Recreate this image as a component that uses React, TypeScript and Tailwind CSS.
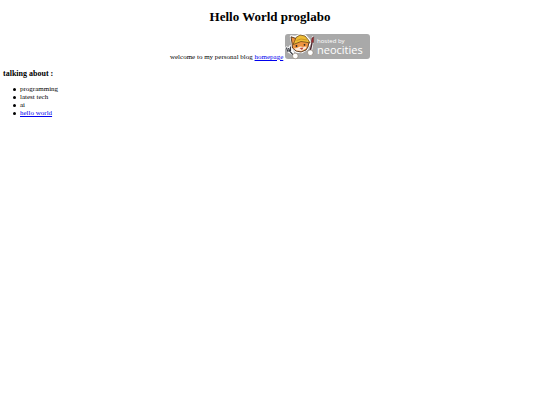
const topics = ["programming", "latest tech", "ai"];

const itemClass =
  "flex items-center gap-1 before:size-[3px] before:rounded-full before:bg-black before:content-['']";

function NeocitiesBadge() {
  return (
    <svg
      className="inline-block h-[25px] w-[85px] overflow-visible align-baseline"
      viewBox="0 0 85 25"
      role="img"
      aria-label="hosted by neocities"
    >
      <rect x="0" y="0" width="85" height="25" rx="3" fill="#a9a9a9" />
      {/* white outline round the mascot and its tools */}
      <g fill="#fff" stroke="#fff" strokeWidth="2.4" strokeLinejoin="round" strokeLinecap="round">
        <path d="M7 8 L6 2.5 L10 3 L15 1 L20 1.5 L24 6 L25 9 L22 15 L17 18 L11 17.5 L7.5 14 Z" />
        <path d="M1.5 13.5 L3 17 L9 21 L5 12.5" />
        <path d="M28 3.5 L26 16" />
      </g>
      {/* fork */}
      <path
        d="M1.5 13.5 L2.5 17 L5.5 16.5 L5.5 12.5 M3.5 14 L4.5 17 L9 22"
        fill="none"
        stroke="#3a3d45"
        strokeWidth="1.2"
      />
      {/* brush */}
      <path d="M27 9 L25.2 17" stroke="#4a2830" strokeWidth="1.5" />
      <path d="M26.2 8.5 L27 4 L28.8 2.8 L28.4 8.5 Z" fill="#a82c30" stroke="#4a2024" strokeWidth="0.6" />
      {/* head */}
      <path
        d="M7 9 L6 2.8 L11 4.5 L20 4 L24 8 L23 13 L21 16 L16 18 L11 17 L7.5 14 Z"
        fill="#ee9440"
        stroke="#4a3020"
        strokeWidth="0.9"
      />
      <path d="M9 14.5 L12 14 L15 12.5 L18 13 L21.5 12.5 L21 14.5 L16.5 17 L11.5 16.5 Z" fill="#fbeadb" />
      {/* hat */}
      <path
        d="M9.5 7.5 L11 3.5 L15 1 L20 2 L23 5.5 L25 9 L21 8.2 L16 7.5 L11 9.5 L8 10.5 Z"
        fill="#efbd35"
        stroke="#6b4a18"
        strokeWidth="0.8"
      />
      <path d="M11.5 6.5 L16 5 L22 6" fill="none" stroke="#b98420" strokeWidth="0.7" />
      <circle cx="11.5" cy="12" r="0.9" fill="#222" />
      <circle cx="19.5" cy="10.8" r="0.9" fill="#222" />
      <path d="M14.5 14 L18.5 13.5 L17 16 Z" fill="#b94436" />
      {/* paws */}
      <circle cx="10.3" cy="22" r="2.8" fill="#fff" stroke="#7a6a58" strokeWidth="0.5" />
      <circle cx="25.3" cy="18.7" r="2.8" fill="#fff" stroke="#7a6a58" strokeWidth="0.5" />
      <text x="32" y="9" fill="#fff" className="font-['Open_Sans',sans-serif] text-[6px]">
        hosted by
      </text>
      <text x="32" y="20" fill="#fff" className="font-['Open_Sans',sans-serif] text-[11px]">
        neocities
      </text>
    </svg>
  );
}

export default function App() {
  return (
    <main className="bg-white px-[3px] pt-[9px] font-['Liberation_Serif',serif] text-[7px] leading-[8px] text-black">
      <h1 className="text-center text-[13px] leading-4 font-bold">Hello World proglabo</h1>
      <p className="mt-[9px] text-center">
        welcome to my personal blog{" "}
        <a href="#homepage" className="text-[#0000ee] underline">
          homepage
        </a>{" "}
        <NeocitiesBadge />
      </p>
      <h3 className="mt-2 text-[8px] leading-[9px] font-bold">talking about :</h3>
      <ul className="mt-[7px] pl-[10px]">
        {topics.map((topic) => (
          <li key={topic} className={itemClass}>
            {topic}
          </li>
        ))}
        <li className={itemClass}>
          <a href="#hello-world" className="text-[#0000ee] underline">
            hello world
          </a>
        </li>
      </ul>
    </main>
  );
}
